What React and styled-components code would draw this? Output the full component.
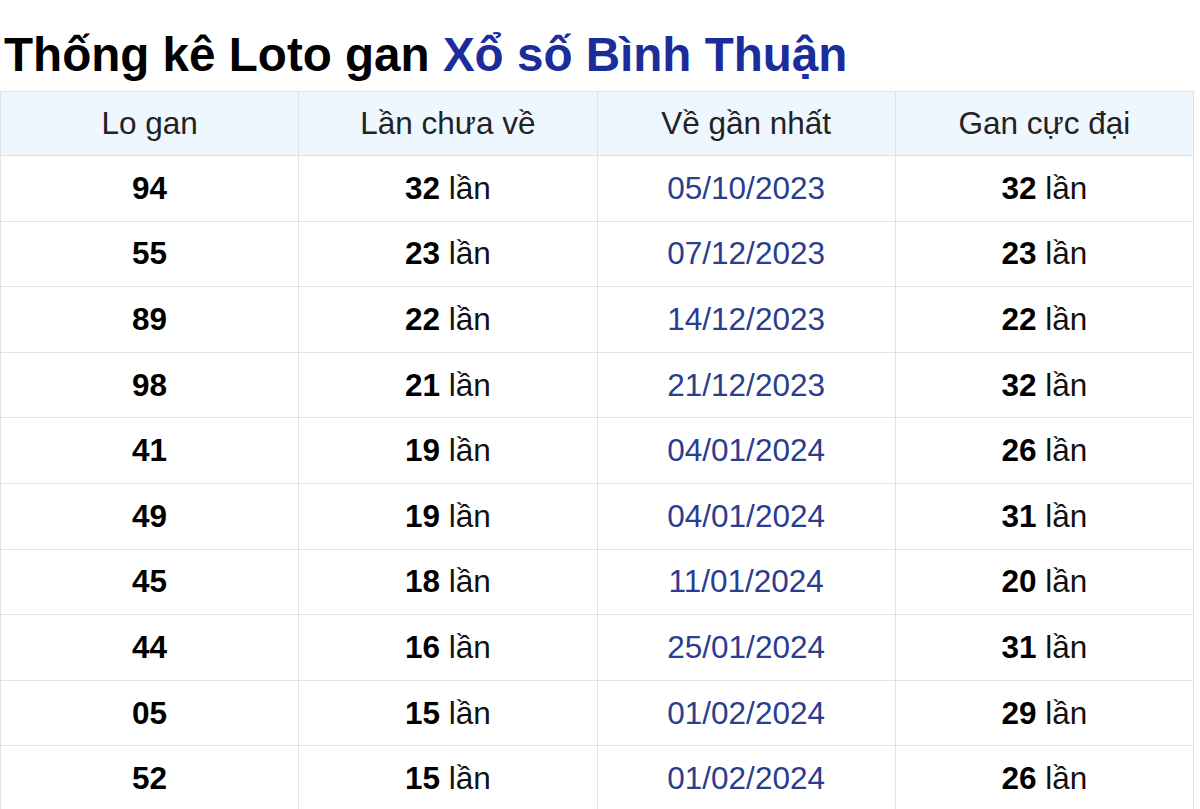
import React from "react";
import styled, { createGlobalStyle } from "styled-components";

const GlobalStyle = createGlobalStyle`
  body {
    margin: 0;
    background: #fff;
    font-family: "Liberation Sans", Arial, sans-serif;
  }
`;

const rows = [
  ["94", "32", "05/10/2023", "32"],
  ["55", "23", "07/12/2023", "23"],
  ["89", "22", "14/12/2023", "22"],
  ["98", "21", "21/12/2023", "32"],
  ["41", "19", "04/01/2024", "26"],
  ["49", "19", "04/01/2024", "31"],
  ["45", "18", "11/01/2024", "20"],
  ["44", "16", "25/01/2024", "31"],
  ["05", "15", "01/02/2024", "29"],
  ["52", "15", "01/02/2024", "26"],
];

function App() {
  return (
    <Page>
      <GlobalStyle />
      <Title>
        Thống kê Loto gan <span>Xổ số Bình Thuận</span>
      </Title>
      <Table>
        <thead>
          <tr>
            <th>Lo gan</th>
            <th>Lần chưa về</th>
            <th>Về gần nhất</th>
            <th>Gan cực đại</th>
          </tr>
        </thead>
        <tbody>
          {rows.map(([lo, count, date, max], i) => (
            <tr key={i}>
              <td>
                <b>{lo}</b>
              </td>
              <td>
                <b>{count}</b> lần
              </td>
              <DateCell>{date}</DateCell>
              <td>
                <b>{max}</b> lần
              </td>
            </tr>
          ))}
        </tbody>
      </Table>
    </Page>
  );
}

const Page = styled.div`
  width: 1195px;
  padding: 27px 0 0;
`;

const Title = styled.h1`
  margin: 0 0 9px;
  padding-left: 4px;
  font-size: 47.6px;
  font-weight: bold;
  color: #000;
  span {
    color: #1a2d9b;
  }
`;

const Table = styled.table`
  width: 1194px;
  margin-left: 0;
  border-collapse: collapse;
  table-layout: fixed;
  font-size: 31.5px;
  color: #111;
  th,
  td {
    border: 1px solid #dfe1e5;
    text-align: center;
    padding: 0;
  }
  th {
    height: 63px;
    background: #eef6fe;
    font-weight: normal;
    color: #222;
  }
  td {
    height: 64.6px;
  }
  b {
    font-weight: bold;
    color: #000;
  }
`;

const DateCell = styled.td`
  color: #2a3d8e;
`;

export default App;
